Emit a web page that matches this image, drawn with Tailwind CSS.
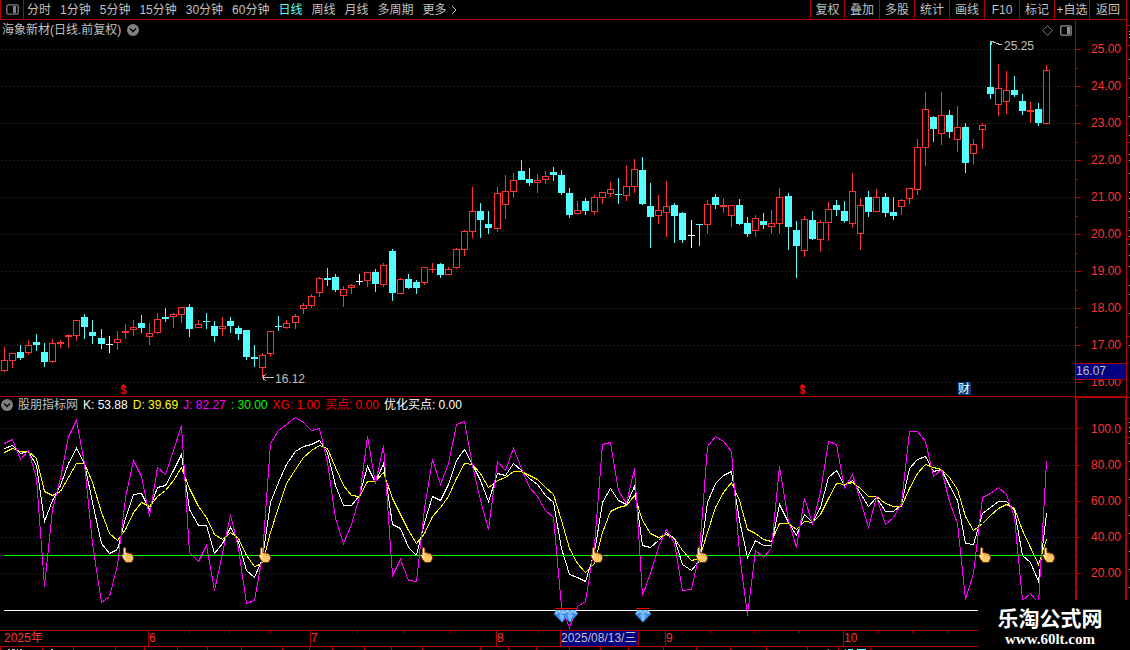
<!DOCTYPE html>
<html lang="zh-CN">
<head>
<meta charset="utf-8">
<title>海象新材 日线</title>
<script src="https://cdn.jsdelivr.net/npm/@tailwindcss/browser@4"></script>
</head>
<body class="bg-black">
<div class="relative flex min-h-screen overflow-hidden bg-black font-['Liberation_Sans','Noto_Sans_CJK_SC',sans-serif] text-xs leading-4 text-[#c0c0c0]">
  <div class="flex min-w-0 flex-1 flex-col border-r border-[#b00000]">

    <header class="flex h-5 items-stretch justify-between border-b border-l border-[#b00000]">
      <nav class="flex items-center gap-[9px] whitespace-nowrap">
        <button class="-mr-[6px] flex h-full w-[23px] items-center justify-center border-r border-[#b00000]" aria-label="侧栏">
          <svg class="h-[11px] w-[13px]" viewBox="0 0 13 11"><rect x=".8" y=".8" width="11.4" height="9.4" rx="1.5" fill="none" stroke="#808080" stroke-width="1.3"/><rect x="7" y="2" width="3" height="7" fill="#808080"/></svg>
        </button>
        <button>分时</button>
        <button>1分钟</button>
        <button>5分钟</button>
        <button>15分钟</button>
        <button>30分钟</button>
        <button>60分钟</button>
        <button class="text-[#54ffff]">日线</button>
        <button>周线</button>
        <button>月线</button>
        <button>多周期</button>
        <button class="flex items-center gap-1">更多<svg class="h-2 w-[6px]" viewBox="0 0 6 8"><path d="M1 0l4 4-4 4" fill="none" stroke="#c0c0c0"/></svg></button>
      </nav>
      <nav class="flex whitespace-nowrap">
        <button class="w-[34px] border-l border-[#b00000]">复权</button>
        <button class="w-[35px] border-l border-[#b00000]">叠加</button>
        <button class="w-[35px] border-l border-[#b00000]">多股</button>
        <button class="w-[35px] border-l border-[#b00000]">统计</button>
        <button class="w-[35px] border-l border-[#b00000]">画线</button>
        <button class="w-[35px] border-l border-[#b00000]">F10</button>
        <button class="w-[35px] border-l border-[#b00000]">标记</button>
        <button class="w-[35px] border-l border-[#b00000]">+自选</button>
        <button class="w-[37px] border-l border-[#b00000]">返回</button>
      </nav>
    </header>

    <section class="flex h-[377px] border-b border-[#b00000]">
      <div class="relative min-w-0 flex-1">
        <svg id="price" class="block h-full w-full" viewBox="0 20 1075 376" preserveAspectRatio="xMinYMin meet" shape-rendering="crispEdges">
          <g id="priceGrid" stroke="#b00000" stroke-dasharray="1 3"></g>
          <g id="candles"></g>
          <g fill="none" stroke="#c0c0c0">
            <path d="M990 41.5h4M991.5 41v4M993 42.500h3M996 43.500h3M998 44.500h4"/>
            <path d="M262 377.500h12M263.500 375v5M265.500 374v1M264.500 375v1M264.500 379v1M265.500 380v1"/>
          </g>
          <g fill="#ff0000" font-size="10" font-weight="bold" text-anchor="middle">
            <path d="M121 387v-1h1v-1h1v-1h1v1h1v1h1v1z"/><text x="123.500" y="394">$</text>
            <path d="M800 387v-1h1v-1h1v-1h1v1h1v1h1v1z"/><text x="802.500" y="394">$</text>
          </g>
          <g fill="#c0c0c0" font-size="12"><text x="1004" y="50">25.25</text><text x="275" y="383">16.12</text></g>
          <rect x="958" y="382" width="13" height="13" fill="#003c74"/>
          <text x="958" y="393" font-size="12" fill="#ffffff">财</text>
        </svg>
        <div class="absolute inset-x-0 top-0 flex h-5 items-center justify-between pl-[2px] pr-[3px]">
          <h1 class="flex items-center gap-[6px]">海象新材(日线.前复权)
            <button aria-label="展开"><svg class="block h-3 w-3" viewBox="0 0 12 12"><circle cx="6" cy="6" r="6" fill="#808080"/><path d="M3 4.500l3 3 3-3" fill="none" stroke="#000" stroke-width="1.3"/></svg></button>
          </h1>
          <div class="flex items-center gap-[7px]">
            <button aria-label="标记点"><svg class="block h-[11px] w-[11px]" viewBox="0 0 11 11"><path d="M5.500.7l4.800 4.800-4.800 4.800L.7 5.500z" fill="none" stroke="#808080"/></svg></button>
            <button aria-label="侧栏"><svg class="block h-[11px] w-3" viewBox="0 0 12 11"><rect x=".8" y=".8" width="10.400" height="9.400" rx="1.200" fill="none" stroke="#909090" stroke-width="1.300"/><rect x="7" y="2" width="3" height="7" fill="#909090"/></svg></button>
          </div>
        </div>
      </div>
      <div class="relative w-[51px] overflow-hidden border-l border-[#b00000] pt-[11px] text-[#ff3232]">
        <svg id="priceTicks" class="absolute left-0 top-0 h-[376px] w-2" viewBox="0 20 8 376" shape-rendering="crispEdges" fill="#b00000"></svg>
        <ul class="pr-[5px] text-right">
          <li class="h-[37px] leading-[37px]">25.00</li>
          <li class="h-[37px] leading-[37px]">24.00</li>
          <li class="h-[37px] leading-[37px]">23.00</li>
          <li class="h-[37px] leading-[37px]">22.00</li>
          <li class="h-[37px] leading-[37px]">21.00</li>
          <li class="h-[37px] leading-[37px]">20.00</li>
          <li class="h-[37px] leading-[37px]">19.00</li>
          <li class="h-[37px] leading-[37px]">18.00</li>
          <li class="h-[37px] leading-[37px]">17.00</li>
          <li class="h-[37px] leading-[37px]">16.00</li>
        </ul>
        <div class="absolute inset-x-0 top-[343px] h-[17px] border-y border-[#b00000] bg-[#000080] leading-[15px] text-[#c0c0c0]">16.07</div>
      </div>
    </section>

    <section class="flex h-[233px]">
      <div class="relative min-w-0 flex-1">
        <svg id="kdj" class="block h-full w-full" viewBox="0 397 1075 233" preserveAspectRatio="xMinYMin meet">
          <defs>
            <g id="hand">
              <path d="M2.500.5h1.500l1 1v4l5 1 2 1.500.7 3-1 3-1.700 1.500H5l-2.500-3L.5 8.500l.5-1.300 1.500.5z" fill="#ffc866" stroke="#6b2c08" stroke-width="1"/>
              <path d="M3.300 1.500v6.500M2 8.500l2 2.500" stroke="#fff4d8" stroke-width="1.200" fill="none"/>
              <path d="M6.500 6.500v2M8.500 7v2M10.500 7.500v2" stroke="#e09a3c" stroke-width=".7"/>
            </g>
            <g id="gem">
              <path d="M3 1h10l3 4-8 8.500L0 5z" fill="#3d8ff0"/>
              <path d="M3 1h10l3 4H0z" fill="#9bd0ff"/>
              <path d="M5 5h6l-3 8z" fill="#7cc0ff"/>
              <path d="M3 1l2 4 3-4 3 4 2-4M0 5h16" stroke="#2c78d8" stroke-width=".7" fill="none"/>
              <path d="M1.500-.5h13" stroke="#ff0000"/>
            </g>
          </defs>
          <g id="kdjGrid" stroke="#b00000" stroke-dasharray="1 3" shape-rendering="crispEdges"></g>
          <g id="kdjLines" fill="none" shape-rendering="crispEdges"></g>
          <path d="M4 555.500H1047" stroke="#00ff00" shape-rendering="crispEdges"/>
          <path d="M4 610.500H1075" stroke="#ffffff" shape-rendering="crispEdges"/>
          <use href="#hand" x="121" y="547"/><use href="#hand" x="258" y="547"/><use href="#hand" x="420" y="547"/><use href="#hand" x="590" y="547"/><use href="#hand" x="695" y="547"/><use href="#hand" x="978" y="547"/><use href="#hand" x="1042" y="547"/>
          <use href="#gem" x="554" y="609"/><use href="#gem" x="562" y="609"/><use href="#gem" x="635" y="609"/>
        </svg>
        <div class="absolute left-0 top-0 flex items-center gap-[5px] whitespace-nowrap pl-px">
          <button aria-label="指标菜单"><svg class="block h-3 w-3" viewBox="0 0 12 12"><circle cx="6" cy="6" r="6" fill="#808080"/><path d="M3 4.500l3 3 3-3" fill="none" stroke="#000" stroke-width="1.300"/></svg></button>
          <span>股朋指标网</span>
          <span class="text-white">K: 53.88</span>
          <span class="text-[#ffff00]">D: 39.69</span>
          <span class="text-[#ff00ff]">J: 82.27</span>
          <span class="text-[#00ff00]">: 30.00</span>
          <span class="text-[#ff0000]">XG: 1.00</span>
          <span class="text-[#ff0000]">买点: 0.00</span>
          <span class="text-white">优化买点: 0.00</span>
        </div>
      </div>
      <div class="relative w-[51px] border-l-2 border-r border-t border-[#b00000] pt-[13px] text-[#ff3232]">
        <svg id="kdjTicks" class="absolute left-0 top-0 h-[232px] w-2" viewBox="0 398 8 232" shape-rendering="crispEdges" fill="#b00000"></svg>
        <ul class="pr-1 text-right">
          <li class="h-9 leading-9">100.0</li>
          <li class="h-9 leading-9">80.00</li>
          <li class="h-9 leading-9">60.00</li>
          <li class="h-9 leading-9">40.00</li>
          <li class="h-9 leading-9">20.00</li>
        </ul>
      </div>
    </section>

    <footer>
      <div class="relative h-[17px] border-y border-[#b00000] leading-[15px] text-[#ff3232]">
        <svg id="dateTicks" class="absolute left-0 top-0 h-[2px] w-[1075px]" viewBox="0 0 1075 2" shape-rendering="crispEdges" fill="#b00000"></svg>
        <div class="grid h-full grid-cols-[148px_162px_186px_169px_178px_1fr]">
          <span class="pl-1">2025年</span>
          <span class="border-l border-[#b00000]">6</span>
          <span class="border-l border-[#b00000]">7</span>
          <span class="border-l border-[#b00000]">8</span>
          <span class="border-l border-[#b00000]">9</span>
          <span class="border-l border-[#b00000]">10</span>
        </div>
        <span class="absolute left-[560px] top-0 h-full w-[79px] whitespace-nowrap border-x border-[#b00000] bg-[#000080] text-[#c0c0c0]">2025/08/13/三</span>
      </div>
      <svg id="edge" class="block h-[3px] w-[1075px]" viewBox="0 647 1075 3" shape-rendering="crispEdges" fill="#b00000">
        <path d="M8 649h2v1H8zM12 649h3v1h-3zM17 649h1v1h-1zM20 649h2v1h-2zM51 649h2v1h-2zM828 649h1v1h-1z" fill="#c0c0c0"/>
        <path d="M845 649h1v1h-1zM848 649h5v1h-5zM857 649h9v1h-9z" fill="#54ffff"/>
      </svg>
    </footer>
  </div>

  <svg id="strip" class="h-[650px] w-[3px] shrink-0" viewBox="1127 0 3 650" shape-rendering="crispEdges"></svg>

  <aside class="absolute bottom-0 right-0 flex h-[50px] w-[152px] flex-col items-center bg-black pr-2 pt-[6px] text-white">
    <div class="text-[21px] font-bold leading-[26px]">乐淘公式网</div>
    <a href="#" class="font-['Liberation_Serif',serif] text-[15px] font-bold leading-[14px]">www.60lt.com</a>
  </aside>
</div>

<script>
// x, high, body top, body bottom, low, kind (R rise, C fall, W flat)
const candles = `4 347 360 371 372 R|12 353 353 361 368 R|20 345 352 358 360 C|28 340 345 353 355 R|36 334 342 345 351 C|44 343 352 362 367 C|52 339 343 362 363 R|60 340 342 344 348 R|68 334 335 337 348 R|76 320 320 336 341 R|84 314 317 327 339 C|92 320 332 336 344 C|101 329 338 344 349 C|109 336 344 345 353 W|117 331 339 343 350 R|125 324 331 333 339 R|133 320 327 330 336 R|141 315 323 328 333 C|149 323 333 337 345 R|157 313 319 333 334 R|165 308 317 319 322 C|173 313 314 317 328 R|181 307 307 315 323 R|189 304 307 329 337 C|198 320 324 328 328 R|206 313 321 322 329 C|214 321 326 336 342 C|222 317 326 329 336 R|230 317 321 326 333 C|238 326 328 334 340 C|246 330 330 357 360 C|254 345 357 359 367 C|262 353 355 368 377 R|270 331 331 354 357 R|278 316 326 327 331 C|286 320 323 328 329 R|295 314 316 323 329 R|303 303 305 309 314 R|311 294 296 306 308 R|319 277 278 293 297 R|327 268 278 280 286 C|335 274 277 290 292 C|343 286 289 296 307 R|351 284 285 288 294 R|359 274 281 282 285 W|367 272 272 281 287 R|375 269 272 284 292 C|383 263 265 285 287 R|392 249 251 293 301 C|400 278 279 294 294 R|408 274 279 288 289 C|416 280 282 288 294 C|424 267 267 283 285 R|432 263 269 270 273 R|440 263 264 275 278 C|448 267 269 275 275 R|456 248 249 268 269 R|464 230 231 250 256 R|472 187 211 232 238 R|480 203 211 220 238 C|488 211 224 228 234 C|497 187 193 229 232 R|505 175 191 205 219 R|513 173 180 192 198 R|521 160 171 180 180 C|529 168 179 183 186 C|537 174 180 183 193 R|545 171 176 180 184 R|553 167 172 175 181 C|561 170 175 193 195 C|569 188 193 215 218 C|577 201 210 214 215 R|585 198 201 211 215 C|594 195 197 212 215 R|602 192 192 198 204 R|610 182 189 194 197 R|618 178 194 195 204 C|626 165 186 196 201 R|634 159 169 187 193 R|642 157 170 204 205 C|650 183 206 217 248 C|658 195 210 216 224 R|666 181 206 213 237 R|674 203 205 216 243 C|682 212 213 240 243 C|691 220 235 236 248 W|699 224 224 225 246 C|707 200 204 225 234 R|715 194 197 205 209 C|723 198 205 207 213 R|731 205 205 216 227 R|739 199 205 224 225 C|747 217 223 234 237 C|755 215 218 231 237 R|763 213 221 225 229 C|771 210 223 227 234 R|779 188 197 224 234 R|788 193 196 227 250 C|796 221 230 246 278 C|804 216 219 251 257 R|812 211 220 239 240 C|820 220 222 240 252 R|828 202 209 223 241 R|836 200 205 210 216 C|844 201 211 221 223 C|852 173 191 224 228 R|860 198 205 234 250 R|868 191 197 212 217 C|876 189 197 212 212 R|885 193 197 213 217 C|893 197 212 216 220 C|901 199 200 207 215 R|909 188 188 199 204 R|917 139 147 190 195 R|925 92 109 148 166 R|933 116 117 129 142 C|941 92 115 134 145 R|949 110 115 132 138 C|957 106 127 140 152 R|965 123 127 163 173 C|973 139 144 154 164 R|982 123 125 130 149 R|990 41 87 94 99 C|998 64 88 105 116 R|1006 71 90 102 114 R|1014 76 90 95 97 C|1022 94 101 111 115 C|1030 102 110 112 123 R|1038 103 109 123 126 C|1046 65 70 124 124 R`
  .split('|').map(s => s.split(' '));
const xs = candles.map(c => +c[0]);
const K = [448,445,453,451,465,521,500,485,463,448,463,502,543,553,549,518,494,493,509,487,485,470,454,509,525,525,553,543,527,542,570,577,558,502,482,464,451,446,444,440,452,485,505,505,495,466,482,463,524,528,547,555,522,496,500,484,460,449,464,480,501,473,475,463,470,478,484,495,502,548,574,577,581,552,502,488,500,504,486,545,547,540,532,538,564,570,560,502,483,475,471,520,557,540,545,545,504,522,535,514,522,507,477,470,485,480,493,506,497,511,511,504,468,459,456,471,469,485,500,543,544,513,507,501,501,510,555,562,581,513];
const D = [452,448,451,451,458,491,495,491,477,463,463,482,512,533,540,529,512,502,506,496,490,480,467,488,506,517,534,539,532,538,555,566,563,532,507,483,469,457,450,445,448,467,485,495,496,481,481,472,498,514,530,543,533,516,507,496,478,463,464,473,487,480,477,471,471,475,479,487,494,520,548,563,572,563,532,511,507,505,495,520,533,537,534,538,550,560,558,532,507,492,482,500,529,533,539,541,523,523,529,521,522,514,498,483,484,482,488,496,496,503,506,506,488,473,464,467,469,477,489,516,530,523,515,508,504,508,530,547,564,539];
const J = [443,439,459,450,478,586,509,478,436,420,463,543,602,596,565,497,460,476,516,467,474,450,425,552,561,545,590,553,514,548,603,600,555,443,430,424,417,422,430,428,462,518,543,524,497,436,483,445,575,559,580,581,508,459,484,463,424,421,465,500,529,461,470,448,468,487,496,510,517,606,627,606,601,545,444,442,490,503,468,595,573,547,529,543,590,589,552,446,436,441,451,553,615,550,557,548,466,520,547,498,523,492,441,444,488,474,500,527,497,524,517,503,431,431,441,476,469,501,523,599,573,497,493,487,494,517,600,593,603,461];

const put = (id, markup) => document.getElementById(id).insertAdjacentHTML('beforeend', markup);
const colors = { R: '#ff3232', C: '#54ffff', W: '#ffffff' };

put('candles', candles.map(([xt, h, t, b, l, k]) => {
  const x = +xt, c = colors[k], high = +h, top = +t, bottom = +b, low = +l;
  let m = '';
  if (k === 'R' && bottom - top > 2) {
    m += `<rect x="${x - 2.5}" y="${top + .5}" width="6" height="${bottom - top - 1}" fill="none" stroke="${c}"/>`;
    if (top > high) m += `<rect x="${x}" y="${high}" width="1" height="${top - high}" fill="${c}"/>`;
    if (low > bottom) m += `<rect x="${x}" y="${bottom}" width="1" height="${low - bottom}" fill="${c}"/>`;
  } else {
    m += `<rect x="${x - 3}" y="${top}" width="7" height="${bottom - top}" fill="${c}"/><rect x="${x}" y="${high}" width="1" height="${low - high}" fill="${c}"/>`;
  }
  return m;
}).join(''));

const line = (ys, c) => `<polyline points="${ys.map((y, i) => (xs[i] + .5) + ',' + (y + .5)).join(' ')}" stroke="${c}"/>`;
put('kdjLines', line(K, '#ffffff') + line(D, '#ffff00') + line(J, '#ff00ff'));

for (let i = 0; i < 10; i++) {
  const y = 49 + 37 * i;
  put('priceGrid', `<path d="M1 ${y + .5}H1075"/>`);
  put('priceTicks', `<rect x="0" y="${y}" width="5" height="1"/>` + (i < 9 ? `<rect x="0" y="${y + 19}" width="2" height="1"/>` : ''));
}
[428, 465, 501, 537, 573].forEach(y => {
  put('kdjGrid', `<path d="M1 ${y + .5}H1075"/>`);
  put('kdjTicks', `<rect x="0" y="${y}" width="4" height="1"/><rect x="0" y="${y + 18}" width="1" height="1"/>`);
});
[189,229,270,357,403,450,538,710,754,799,878,912,947].forEach(x => put('dateTicks', `<rect x="${x}" y="0" width="1" height="2"/>`));
[0,42,73,115,144,177,207,241,282,309,332,364,391,422,480,508,536,569,600,628,663,696,730,766,807,838,870].forEach(x => put('edge', `<rect x="${x}" y="647" width="1" height="3"/>`));
[25,45,142,239,336,397,418,437].forEach(y => put('strip', `<rect x="1127" y="${y}" width="3" height="1" fill="#b00000"/>`));
[31,34,37,59,78,97,116,135,154,160,173,192,198,211,217,230,236,244,255,266,285,294,313,345,422,427,431,443,461,479,497,515,533,551,569,587].forEach(y => put('strip', `<rect x="1129" y="${y}" width="1" height="1" fill="#c0c0c0"/>`));
</script>
</body>
</html>
